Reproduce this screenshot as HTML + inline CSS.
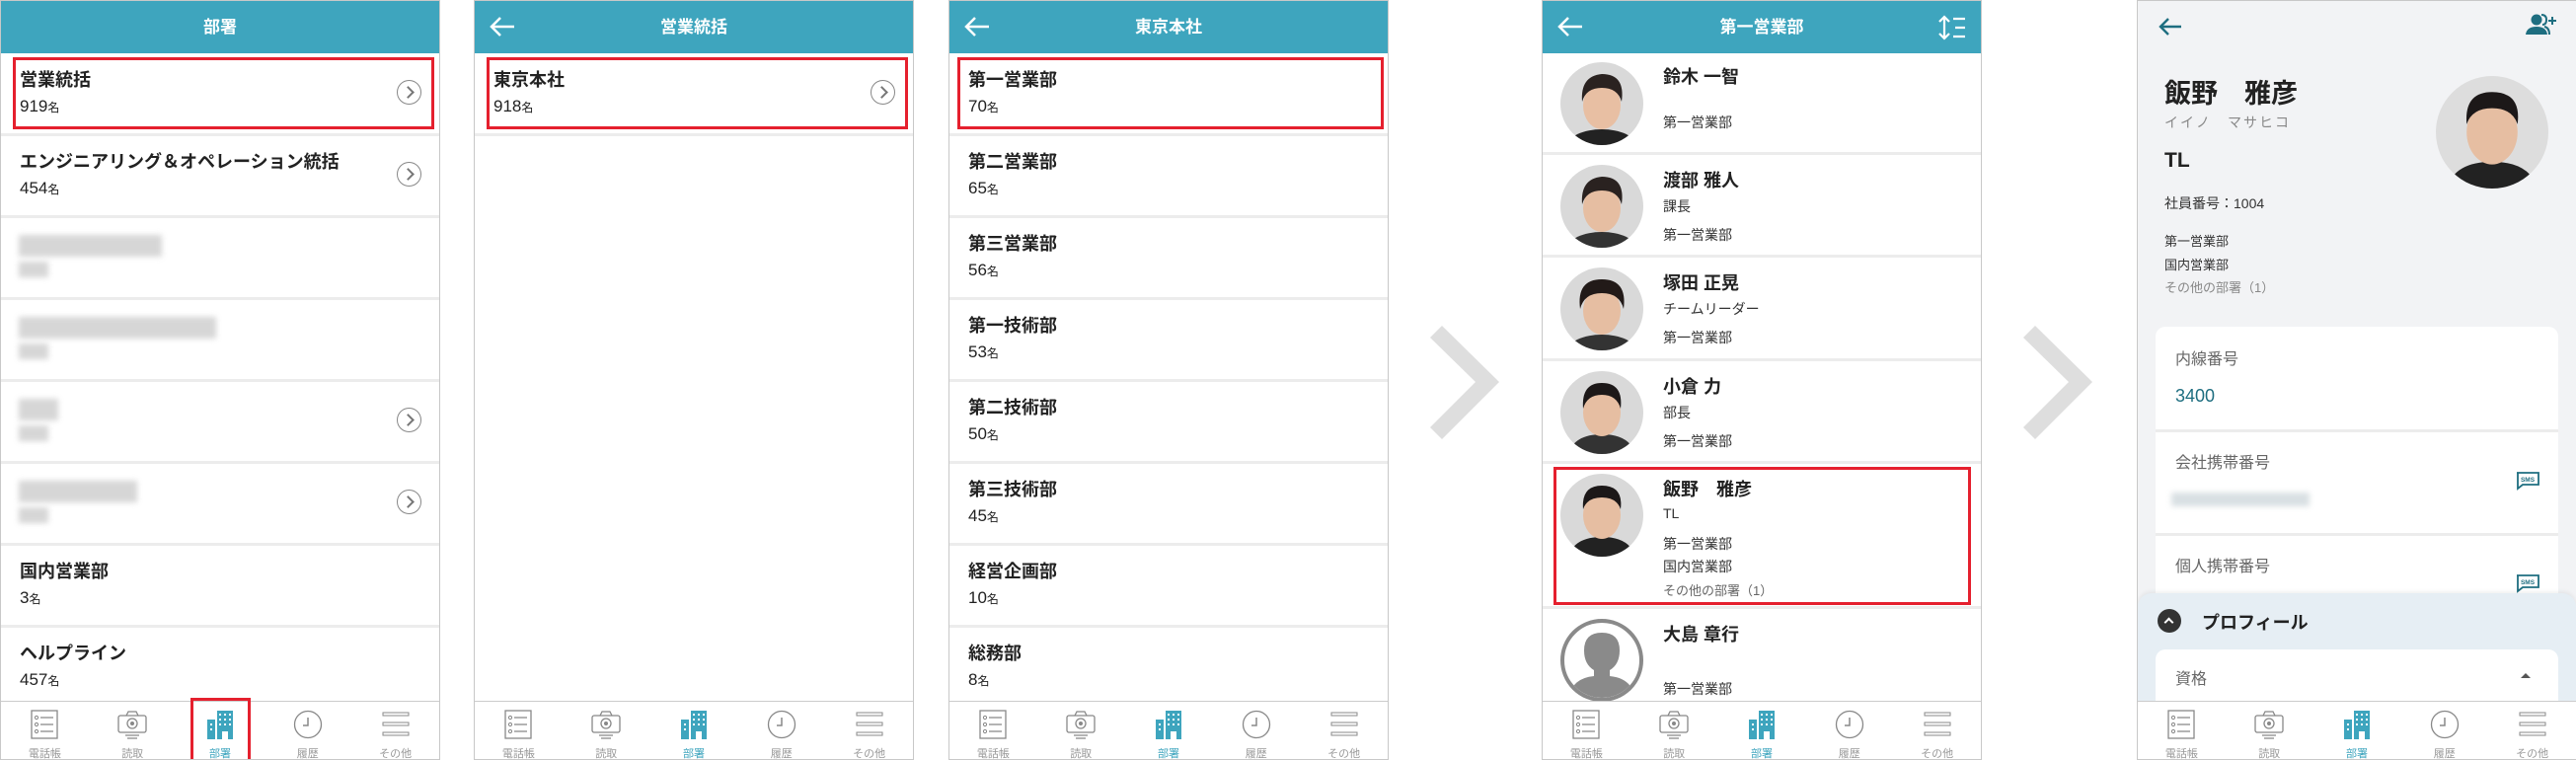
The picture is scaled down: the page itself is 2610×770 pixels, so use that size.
<!DOCTYPE html>
<html><head><meta charset="utf-8"><style>
*{margin:0;padding:0;box-sizing:border-box}
body{width:2610px;height:770px;background:#fff;position:relative;overflow:hidden;font-family:"Liberation Sans","Noto Sans CJK JP",sans-serif;color:#222}
.p{position:absolute;top:0;width:446px;height:770px;border:1px solid #c8c8c8;background:#fff;overflow:hidden}
.hd{position:absolute;left:0;top:0;right:0;height:53px;background:#3ea5be;color:#fff;font-size:17px;font-weight:bold;text-align:center;line-height:53px}
.bk{position:absolute;left:14px;top:14px}
.row{position:absolute;left:0;right:0;height:83px;border-bottom:3px solid #ececec}
.t{position:absolute;left:19px;top:12px;font-size:18px;font-weight:bold;color:#222}
.c{position:absolute;left:19px;top:43px;font-size:17px;color:#222}
.c small{font-size:12px}
.ch{position:absolute;right:18px;top:26px;width:25px;height:25px;border:1.5px solid #888;border-radius:50%}
.ch:after{content:"";position:absolute;left:6px;top:7px;width:7px;height:7px;border-right:2px solid #777;border-top:2px solid #777;transform:rotate(45deg)}
.red{position:absolute;border:3px solid #e5202e}
.tb{position:absolute;left:0;right:0;top:709px;height:61px;border-top:1px solid #ccc;background:#fff;display:flex}
.tb div{flex:1;text-align:center;position:relative}
.tb svg{position:absolute;left:50%;margin-left:-15px;top:8px}
.tb span{position:absolute;left:0;right:0;top:44px;font-size:11px;color:#999}
.tb .on span{color:#3ea5be}
.blur{position:absolute;background:#ccc;filter:blur(3px);opacity:.8}
.arrow{position:absolute;top:330px;width:70px;height:115px}
.pr{position:absolute;left:0;right:0;border-bottom:3px solid #ececec}
.av{position:absolute;left:18px;width:84px;height:84px;border-radius:50%;overflow:hidden;background:#d9d9d9}
.nm{position:absolute;left:122px;font-size:18px;font-weight:bold}
.sl{position:absolute;left:122px;font-size:14px;color:#333}
</style></head><body>

<!-- Panel 1 -->
<div class="p" style="left:0">
<div class="hd">部署</div>
<div class="row" style="top:54px"><div class="t">営業統括</div><div class="c">919<small>名</small></div><div class="ch"></div></div>
<div class="row" style="top:137px"><div class="t">エンジニアリング＆オペレーション統括</div><div class="c">454<small>名</small></div><div class="ch"></div></div>
<div class="row" style="top:220px"><div class="blur" style="left:18px;top:17px;width:145px;height:22px"></div><div class="blur" style="left:18px;top:44px;width:30px;height:16px"></div></div>
<div class="row" style="top:303px"><div class="blur" style="left:18px;top:17px;width:200px;height:22px"></div><div class="blur" style="left:18px;top:44px;width:30px;height:16px"></div></div>
<div class="row" style="top:386px"><div class="blur" style="left:18px;top:17px;width:40px;height:22px"></div><div class="blur" style="left:18px;top:44px;width:30px;height:16px"></div><div class="ch"></div></div>
<div class="row" style="top:469px"><div class="blur" style="left:18px;top:17px;width:120px;height:22px"></div><div class="blur" style="left:18px;top:44px;width:30px;height:16px"></div><div class="ch"></div></div>
<div class="row" style="top:552px"><div class="t">国内営業部</div><div class="c">3<small>名</small></div></div>
<div class="row" style="top:635px"><div class="t">ヘルプライン</div><div class="c">457<small>名</small></div></div>
<div class="red" style="left:12px;top:57px;width:427px;height:73px"></div>
<div class="tb" id="tb1"></div>
<div class="red" style="left:192px;top:706px;width:61px;height:66px"></div>
</div>

<!-- Panel 2 -->
<div class="p" style="left:480px">
<div class="hd">営業統括<svg class="bk" width="28" height="24" viewBox="0 0 28 24"><path d="M26 12H4M12 3L3 12l9 9" stroke="#fff" stroke-width="2.5" fill="none"/></svg></div>
<div class="row" style="top:54px"><div class="t">東京本社</div><div class="c">918<small>名</small></div><div class="ch"></div></div>
<div class="red" style="left:12px;top:57px;width:427px;height:73px"></div>
<div class="tb"></div>
</div>

<!-- Panel 3 -->
<div class="p" style="left:961px">
<div class="hd">東京本社<svg class="bk" width="28" height="24" viewBox="0 0 28 24"><path d="M26 12H4M12 3L3 12l9 9" stroke="#fff" stroke-width="2.5" fill="none"/></svg></div>
<div class="row" style="top:54px"><div class="t">第一営業部</div><div class="c">70<small>名</small></div></div>
<div class="row" style="top:137px"><div class="t">第二営業部</div><div class="c">65<small>名</small></div></div>
<div class="row" style="top:220px"><div class="t">第三営業部</div><div class="c">56<small>名</small></div></div>
<div class="row" style="top:303px"><div class="t">第一技術部</div><div class="c">53<small>名</small></div></div>
<div class="row" style="top:386px"><div class="t">第二技術部</div><div class="c">50<small>名</small></div></div>
<div class="row" style="top:469px"><div class="t">第三技術部</div><div class="c">45<small>名</small></div></div>
<div class="row" style="top:552px"><div class="t">経営企画部</div><div class="c">10<small>名</small></div></div>
<div class="row" style="top:635px"><div class="t">総務部</div><div class="c">8<small>名</small></div></div>
<div class="red" style="left:8px;top:57px;width:432px;height:73px"></div>
<div class="tb"></div>
</div>

<svg class="arrow" style="left:1449px" viewBox="0 0 70 115"><path d="M0 12L12 0L70 57L12 115L0 103L46 57Z" fill="#dedede"/></svg>

<!-- Panel 4 -->
<div class="p" style="left:1562px">
<div class="hd">第一営業部<svg class="bk" width="28" height="24" viewBox="0 0 28 24"><path d="M26 12H4M12 3L3 12l9 9" stroke="#fff" stroke-width="2.5" fill="none"/></svg>
<svg style="position:absolute;right:12px;top:14px" width="32" height="26" viewBox="0 0 32 26"><path d="M7 2v22M2 7l5-5 5 5M2 19l5 5 5-5M16 4h12M18 13h10M16 22h12" stroke="#fff" stroke-width="2.2" fill="none"/></svg></div>
<div class="pr" style="top:54px;height:102px"><div class="av" style="top:8px"><svg width="84" height="84" viewBox="0 0 84 84"><ellipse cx="42" cy="84" rx="34" ry="16" fill="#222"/><ellipse cx="42" cy="44" rx="19" ry="24" fill="#e8bfa3"/><path d="M22 40q-2-26 20-28q24 0 20 28q-4-14-20-14q-16 0-20 14z" fill="#2a2220"/></svg></div><div class="nm" style="top:9px">鈴木 一智</div><div class="sl" style="top:59px">第一営業部</div></div>
<div class="pr" style="top:156px;height:104px"><div class="av" style="top:10px"><svg width="84" height="84" viewBox="0 0 84 84"><ellipse cx="42" cy="84" rx="34" ry="16" fill="#333"/><ellipse cx="42" cy="44" rx="19" ry="24" fill="#e6bea2"/><path d="M22 40q-2-26 20-28q24 0 20 28q-4-14-20-14q-16 0-20 14z" fill="#2a2220"/></svg></div><div class="nm" style="top:12px">渡部 雅人</div><div class="sl" style="top:42px">課長</div><div class="sl" style="top:71px">第一営業部</div></div>
<div class="pr" style="top:260px;height:105px"><div class="av" style="top:10px"><svg width="84" height="84" viewBox="0 0 84 84"><ellipse cx="42" cy="84" rx="34" ry="16" fill="#333"/><ellipse cx="42" cy="44" rx="19" ry="24" fill="#e6bea2"/><path d="M20 42q-4-30 22-30q26 0 22 30q-4-16-22-16q-18 0-22 16z" fill="#221a18"/></svg></div><div class="nm" style="top:12px">塚田 正晃</div><div class="sl" style="top:42px">チームリーダー</div><div class="sl" style="top:71px">第一営業部</div></div>
<div class="pr" style="top:365px;height:104px"><div class="av" style="top:10px"><svg width="84" height="84" viewBox="0 0 84 84"><path d="M8 84q6-20 34-20q28 0 34 20z" fill="#333"/><ellipse cx="42" cy="42" rx="19" ry="24" fill="#e6bea2"/><path d="M23 38q-2-26 19-26q22 0 19 26q-4-14-19-14q-15 0-19 14z" fill="#1c1818"/></svg></div><div class="nm" style="top:12px">小倉 力</div><div class="sl" style="top:42px">部長</div><div class="sl" style="top:71px">第一営業部</div></div>
<div class="pr" style="top:469px;height:147px"><div class="av" style="top:10px"><svg width="84" height="84" viewBox="0 0 84 84"><path d="M8 84q6-20 34-20q28 0 34 20z" fill="#222"/><ellipse cx="42" cy="42" rx="19" ry="24" fill="#e6bea2"/><path d="M23 36q-2-24 19-24q22 0 19 24q-4-12-19-12q-15 0-19 12z" fill="#1c1818"/></svg></div><div class="nm" style="top:12px">飯野　雅彦</div><div class="sl" style="top:42px">TL</div><div class="sl" style="top:71px">第一営業部</div><div class="sl" style="top:94px">国内営業部</div><div class="sl" style="top:118px;font-size:13px;color:#666">その他の部署（1）</div></div>
<div class="pr" style="top:616px;height:94px;border:0"><div class="av" style="top:10px;background:#fff;border:4px solid #8a8a8a"><svg width="76" height="76" viewBox="0 0 76 76"><path d="M4 76q4-20 26-22v-6q-10-6-10-20q0-18 18-18q18 0 18 18q0 14-10 20v6q22 2 26 22z" fill="#8a8a8a"/></svg></div><div class="nm" style="top:12px">大島 章行</div><div class="sl" style="top:71px">第一営業部</div></div>
<div class="red" style="left:11px;top:472px;width:423px;height:140px"></div>
<div class="tb"></div>
</div>

<svg class="arrow" style="left:2050px" viewBox="0 0 70 115"><path d="M0 12L12 0L70 57L12 115L0 103L46 57Z" fill="#dedede"/></svg>

<!-- Panel 5 -->
<div class="p" style="left:2165px;background:#f2f3f5">
<svg style="position:absolute;left:20px;top:15px" width="26" height="22" viewBox="0 0 26 22"><path d="M24 11H4M11 3L3 11l8 8" stroke="#1e6e80" stroke-width="2.4" fill="none"/></svg>
<svg style="position:absolute;right:20px;top:12px" width="32" height="24" viewBox="0 0 32 24"><circle cx="12" cy="7" r="5.5" fill="#1e6e80"/><path d="M1 22q1-8 11-8q10 0 11 8z" fill="#1e6e80"/><path d="M17 2q5 0 5 5t-4 5M20 14q5 1 5 8" stroke="#1e6e80" stroke-width="2" fill="none"/><path d="M28 4v8M24 8h8" stroke="#1e6e80" stroke-width="2"/></svg>
<div style="position:absolute;left:27px;top:72px;font-size:27px;font-weight:bold">飯野　雅彦</div>
<div style="position:absolute;left:27px;top:113px;font-size:14px;color:#888;letter-spacing:2px">イイノ　マサヒコ</div>
<div style="position:absolute;left:27px;top:150px;font-size:21px;font-weight:bold">TL</div>
<div style="position:absolute;left:27px;top:195px;font-size:14px;color:#333">社員番号：1004</div>
<div style="position:absolute;left:27px;top:233px;font-size:13px;color:#333">第一営業部</div>
<div style="position:absolute;left:27px;top:257px;font-size:13px;color:#333">国内営業部</div>
<div style="position:absolute;left:27px;top:280px;font-size:13px;color:#888">その他の部署（1）</div>
<div style="position:absolute;left:302px;top:76px;width:114px;height:114px;border-radius:50%;overflow:hidden;background:#ddd"><svg width="114" height="114" viewBox="0 0 84 84"><path d="M8 84q6-20 34-20q28 0 34 20z" fill="#222"/><ellipse cx="42" cy="42" rx="19" ry="24" fill="#e6bea2"/><path d="M23 36q-2-24 19-24q22 0 19 24q-4-12-19-12q-15 0-19 12z" fill="#1c1818"/></svg></div>
<div style="position:absolute;left:18px;right:18px;top:330px;height:300px;background:#fff;border-radius:10px">
<div style="position:absolute;left:0;right:0;top:104px;border-top:3px solid #ececec"></div>
<div style="position:absolute;left:0;right:0;top:209px;border-top:3px solid #ececec"></div>
<div style="position:absolute;left:20px;top:19px;font-size:16px;color:#666">内線番号</div>
<div style="position:absolute;left:20px;top:60px;font-size:18px;color:#1e6e80">3400</div>
<div style="position:absolute;left:20px;top:124px;font-size:16px;color:#666">会社携帯番号</div>
<div class="blur" style="left:16px;top:168px;width:140px;height:14px;background:#cfd8dc"></div>
<div style="position:absolute;left:20px;top:229px;font-size:16px;color:#666">個人携帯番号</div>
<svg style="position:absolute;right:18px;top:146px" width="26" height="20" viewBox="0 0 26 20"><path d="M2 2h22v12H8l-5 4V2z" fill="none" stroke="#1e6e80" stroke-width="1.8"/><text x="13" y="11" font-size="6.5" font-weight="bold" text-anchor="middle" fill="#1e6e80" font-family="Liberation Sans">SMS</text></svg>
<svg style="position:absolute;right:18px;top:250px" width="26" height="20" viewBox="0 0 26 20"><path d="M2 2h22v12H8l-5 4V2z" fill="none" stroke="#1e6e80" stroke-width="1.8"/><text x="13" y="11" font-size="6.5" font-weight="bold" text-anchor="middle" fill="#1e6e80" font-family="Liberation Sans">SMS</text></svg>
</div>
<div style="position:absolute;left:0;right:0;top:600px;height:120px;background:#e6eef4;border-radius:14px 14px 0 0;box-shadow:0 -2px 4px rgba(0,0,0,.06)">
<div style="position:absolute;left:20px;top:16px;width:24px;height:24px;border-radius:50%;background:#333"><div style="position:absolute;left:8px;top:10px;width:7px;height:7px;border-left:2px solid #fff;border-top:2px solid #fff;transform:rotate(45deg)"></div></div>
<div style="position:absolute;left:65px;top:16px;font-size:18px;font-weight:bold">プロフィール</div>
<div style="position:absolute;left:18px;right:18px;top:57px;height:70px;background:#fff;border-radius:10px"><div style="position:absolute;left:20px;top:16px;font-size:16px;color:#666">資格</div><div style="position:absolute;right:28px;top:24px;border:5px solid transparent;border-bottom:5px solid #555;border-top:0"></div></div>
</div>
<div class="tb"></div>
</div>

<script>
var tpl='<div><svg width="30" height="30" viewBox="0 0 30 30"><rect x="2" y="1" width="26" height="28" fill="none" stroke="#888" stroke-width="1.3"/><circle cx="7" cy="8" r="1.6" fill="none" stroke="#888"/><circle cx="7" cy="15" r="1.6" fill="none" stroke="#888"/><circle cx="7" cy="22" r="1.6" fill="none" stroke="#888"/><path d="M11 8h13M11 15h13M11 22h13" stroke="#888" stroke-width="1.3"/></svg><span>電話帳</span></div>'+
'<div><svg width="30" height="30" viewBox="0 0 30 30"><rect x="1" y="6" width="28" height="17" rx="2" fill="none" stroke="#888" stroke-width="1.3"/><path d="M9 6l2-4h8l2 4" fill="none" stroke="#888" stroke-width="1.3"/><circle cx="15" cy="14" r="5" fill="none" stroke="#888" stroke-width="1.3"/><circle cx="15" cy="14" r="2" fill="#888"/><path d="M8 26h14M10 29h10" stroke="#888" stroke-width="1.3"/></svg><span>読取</span></div>'+
'<div class="on"><svg width="30" height="30" viewBox="0 0 30 30"><rect x="2" y="10" width="8" height="20" fill="#3ea5be"/><rect x="12" y="1" width="16" height="29" fill="#3ea5be"/><g fill="#fff"><rect x="14" y="4" width="2" height="2"/><rect x="19" y="4" width="2" height="2"/><rect x="24" y="4" width="2" height="2"/><rect x="14" y="9" width="2" height="2"/><rect x="19" y="9" width="2" height="2"/><rect x="24" y="9" width="2" height="2"/><rect x="14" y="14" width="2" height="2"/><rect x="19" y="14" width="2" height="2"/><rect x="24" y="14" width="2" height="2"/><rect x="17" y="22" width="6" height="8"/><rect x="5" y="14" width="2" height="2"/><rect x="5" y="19" width="2" height="2"/></g></svg><span>部署</span></div>'+
'<div><svg width="30" height="30" viewBox="0 0 30 30"><circle cx="15" cy="15" r="13.5" fill="none" stroke="#888" stroke-width="1.3"/><path d="M15 8v8h-5" fill="none" stroke="#888" stroke-width="1.5"/></svg><span>履歴</span></div>'+
'<div><svg width="30" height="30" viewBox="0 0 30 30"><rect x="2" y="3" width="26" height="3" fill="none" stroke="#888"/><rect x="2" y="13" width="26" height="3" fill="none" stroke="#888"/><rect x="2" y="23" width="26" height="3" fill="none" stroke="#888"/></svg><span>その他</span></div>';
document.querySelectorAll('.tb').forEach(function(e){e.innerHTML=tpl;});
</script>
</body></html>
